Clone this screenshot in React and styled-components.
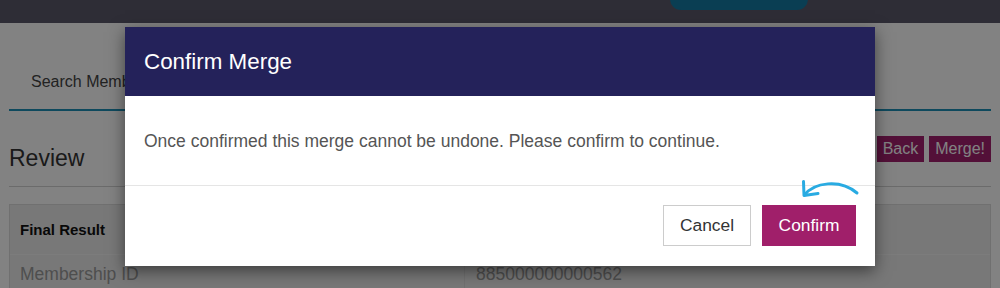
import React from 'react';
import styled, { createGlobalStyle } from 'styled-components';

const GlobalStyle = createGlobalStyle`
    html, body {
        margin: 0;
        padding: 0;
        background: #ffffff;
        font-family: 'Liberation Sans', Arial, sans-serif;
        overflow: hidden;
    }
`

const Page = styled.div`
    width: 1000px;
    height: 288px;
    position: relative;
    overflow: hidden;
`

const TopBar = styled.div`
    height: 23px;
    background-color: #5b596b;
    display: flex;
    justify-content: flex-end;
    align-items: flex-start;
    padding-right: 192px;
    box-sizing: border-box;
`

const TopPill = styled.div`
    width: 138px;
    height: 30px;
    margin-top: -20px;
    border-radius: 11px;
    background-color: #157aa3;
`

const Content = styled.div`
    padding: 0 9px;
`

const Tabs = styled.div`
    height: 88px;
    display: flex;
    align-items: flex-end;
    border-bottom: 2px solid #1d8fb6;
    box-sizing: border-box;
`

const Tab = styled.div`
    padding: 0 22px 18px;
    font-size: 16px;
    color: #444;
`

const ReviewRow = styled.div`
    display: flex;
    justify-content: space-between;
    align-items: flex-start;
    height: 76px;
    border-bottom: 1px solid #d2d2d2;
    box-sizing: border-box;
`

const ReviewTitle = styled.h2`
    margin: 34px 0 0;
    font-size: 23px;
    font-weight: 400;
    color: #333;
`

const Actions = styled.div`
    display: flex;
    gap: 5px;
    margin-top: 25px;
`

const SmallButton = styled.button`
    height: 26px;
    padding: 0 6px;
    border: none;
    background-color: #a3206f;
    color: #ffffff;
    font-family: inherit;
    font-size: 16px;
`

const Panel = styled.div`
    margin-top: 17px;
    background-color: #ebebeb;
    border: 1px solid #dcdcdc;
`

const PanelHead = styled.div`
    height: 49px;
    padding: 0 10px;
    display: flex;
    align-items: center;
    font-size: 15px;
    font-weight: 700;
    color: #111;
    border-bottom: 1px solid #f4f4f4;
`

const PanelRow = styled.div`
    display: grid;
    grid-template-columns: 454px 1fr;
    height: 40px;
    font-size: 17.5px;
    color: #9a9a9a;
    > div {
        padding: 9px 10px 0;
    }
    > div + div {
        border-left: 1px solid #dedede;
        padding-left: 11px;
    }
`

const Backdrop = styled.div`
    position: absolute;
    inset: 0;
    background: rgba(0, 0, 0, 0.49);
    display: flex;
    justify-content: center;
    align-items: flex-start;
    padding-top: 27px;
    box-sizing: border-box;
`

const Modal = styled.div`
    width: 750px;
    background: #ffffff;
    box-shadow: 0 5px 15px rgba(0, 0, 0, 0.5);
`

const ModalHeader = styled.div`
    height: 69px;
    background-color: #24225a;
    display: flex;
    align-items: center;
    padding: 0 19px;
    > h3 {
        margin: 0;
        color: #ffffff;
        font-size: 22.4px;
        font-weight: 400;
    }
`

const ModalBody = styled.div`
    height: 90px;
    display: flex;
    align-items: center;
    padding: 2px 19px 0;
    box-sizing: border-box;
    border-bottom: 1px solid #e5e5e5;
    font-size: 17.5px;
    color: #555;
`

const ModalFooter = styled.div`
    position: relative;
    display: flex;
    justify-content: flex-end;
    gap: 11px;
    padding: 19px 19px 20px;
`

const DialogButton = styled.button`
    height: 41px;
    padding: 0 ${p => (p.$primary ? '15.5px' : '16px')};
    font-family: inherit;
    font-size: 17.4px;
    border: 1px solid ${p => (p.$primary ? '#a01f6a' : '#cccccc')};
    background-color: ${p => (p.$primary ? '#a01f6a' : '#ffffff')};
    color: ${p => (p.$primary ? '#ffffff' : '#333333')};
`

const Arrow = styled.svg`
    position: absolute;
    left: 675px;
    top: -9px;
`

const CurvedArrow = () => (
    <Arrow width="60" height="22" viewBox="0 0 60 22">
        <path d="M4.5 18 C 14 5.5, 40 1.5, 57 16" fill="none" stroke="#29abe2" strokeWidth="3" strokeLinecap="round"/>
        <path d="M3.5 4.5 L4 18.5 L18 16.5" fill="none" stroke="#29abe2" strokeWidth="3" strokeLinecap="round" strokeLinejoin="round"/>
    </Arrow>
)

export default function App() {
    return (
        <Page>
            <GlobalStyle/>
            <TopBar>
                <TopPill/>
            </TopBar>
            <Content>
                <Tabs>
                    <Tab>Search Members</Tab>
                </Tabs>
                <ReviewRow>
                    <ReviewTitle>Review</ReviewTitle>
                    <Actions>
                        <SmallButton>Back</SmallButton>
                        <SmallButton>Merge!</SmallButton>
                    </Actions>
                </ReviewRow>
                <Panel>
                    <PanelHead>Final Result</PanelHead>
                    <PanelRow>
                        <div>Membership ID</div>
                        <div>885000000000562</div>
                    </PanelRow>
                </Panel>
            </Content>
            <Backdrop>
                <Modal>
                    <ModalHeader>
                        <h3>Confirm Merge</h3>
                    </ModalHeader>
                    <ModalBody>
                        Once confirmed this merge cannot be undone. Please confirm to continue.
                    </ModalBody>
                    <ModalFooter>
                        <DialogButton>Cancel</DialogButton>
                        <DialogButton $primary>Confirm</DialogButton>
                        <CurvedArrow/>
                    </ModalFooter>
                </Modal>
            </Backdrop>
        </Page>
    )
}
